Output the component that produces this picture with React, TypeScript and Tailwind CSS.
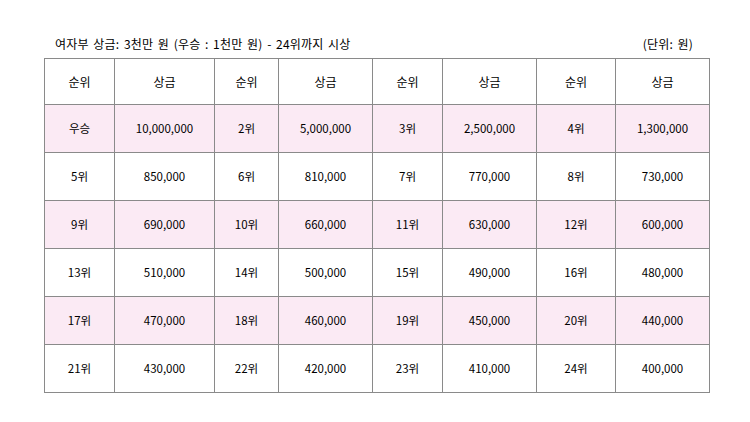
import React from "react";

const rows: string[][] = [
  ["우승", "10,000,000", "2위", "5,000,000", "3위", "2,500,000", "4위", "1,300,000"],
  ["5위", "850,000", "6위", "810,000", "7위", "770,000", "8위", "730,000"],
  ["9위", "690,000", "10위", "660,000", "11위", "630,000", "12위", "600,000"],
  ["13위", "510,000", "14위", "500,000", "15위", "490,000", "16위", "480,000"],
  ["17위", "470,000", "18위", "460,000", "19위", "450,000", "20위", "440,000"],
  ["21위", "430,000", "22위", "420,000", "23위", "410,000", "24위", "400,000"],
];

const widths = ["w-[70px]", "w-[100px]", "w-[64px]", "w-[94px]", "w-[70px]", "w-[94px]", "w-[79px]", "w-[94px]"];
const header = ["순위", "상금", "순위", "상금", "순위", "상금", "순위", "상금"];

export default function App() {
  return (
    <div className="w-[750px] h-[422px] bg-white pl-[44px] pt-[34px] text-[12px] text-black font-normal [font-family:'Noto_Sans_CJK_KR',sans-serif]">
      <div className="w-[666px] flex justify-between pl-[11px] pr-[17px] h-[20px] items-center">
        <span className="tracking-[0.2px] [word-spacing:1.7px]">여자부 상금: 3천만 원 (우승 : 1천만 원) - 24위까지 시상</span>
        <span className="tracking-[0.2px] [word-spacing:1.7px]">(단위: 원)</span>
      </div>
      <table className="mt-[4px] border-collapse table-fixed w-[666px]">
        <colgroup>
          {widths.map((w, i) => (
            <col key={i} className={w} />
          ))}
        </colgroup>
        <tbody>
          <tr className="h-[46px]">
            {header.map((h, i) => (
              <td key={i} className="border border-[#8a8a8a] text-center p-0 leading-none">
                {h}
              </td>
            ))}
          </tr>
          {rows.map((r, ri) => (
            <tr key={ri} className={ri % 2 === 0 ? "h-[48px] bg-[#fbeaf4]" : "h-[48px] bg-white"}>
              {r.map((c, ci) => (
                <td key={ci} className="border border-[#8a8a8a] text-center p-0 text-[11.5px] leading-none">
                  {c}
                </td>
              ))}
            </tr>
          ))}
        </tbody>
      </table>
    </div>
  );
}
